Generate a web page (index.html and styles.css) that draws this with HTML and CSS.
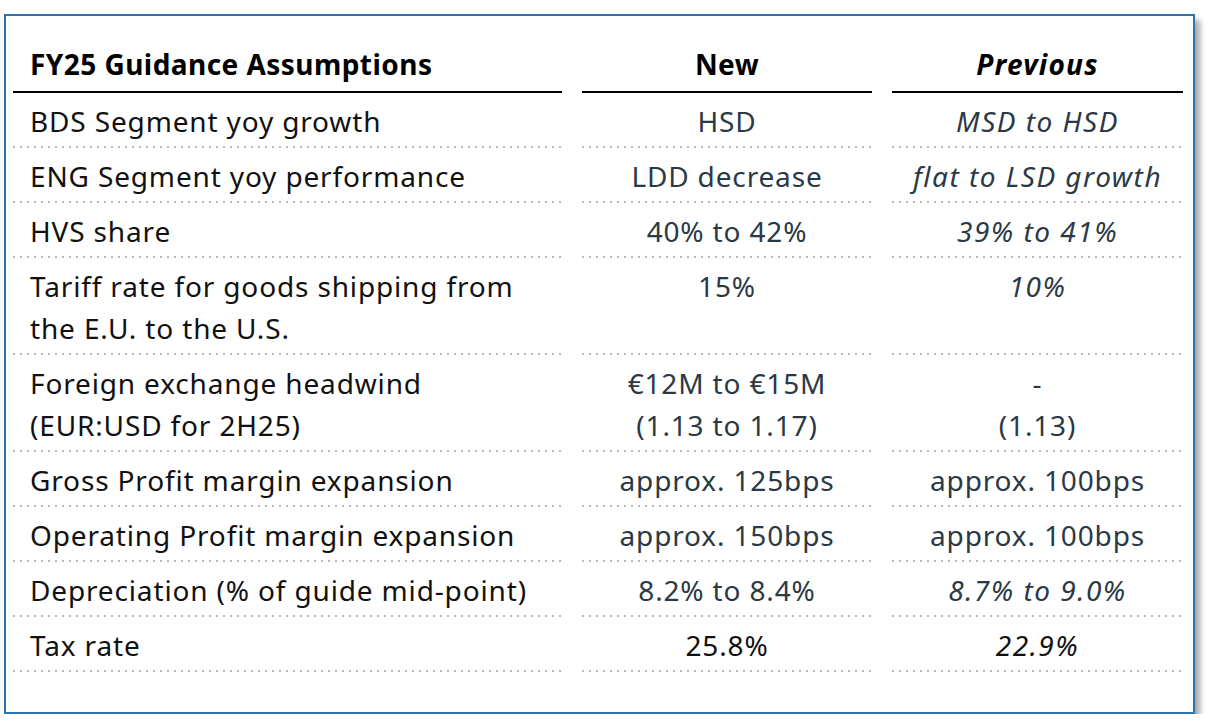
FILE: index.html
```html
<!DOCTYPE html>
<html>
<head>
<meta charset="utf-8">
<link rel="stylesheet" href="styles.css">
</head>
<body>
<div class="frame">
  <div class="table">
    <div class="cell head label">FY25 Guidance Assumptions</div>
    <div class="cell head val">New</div>
    <div class="cell head val prev">Previous</div>

    <div class="cell label">BDS Segment yoy growth</div>
    <div class="cell val">HSD</div>
    <div class="cell val prev">MSD to HSD</div>

    <div class="cell label">ENG Segment yoy performance</div>
    <div class="cell val">LDD decrease</div>
    <div class="cell val prev">flat to LSD growth</div>

    <div class="cell label">HVS share</div>
    <div class="cell val">40% to 42%</div>
    <div class="cell val prev">39% to 41%</div>

    <div class="cell label">Tariff rate for goods shipping from<br>the E.U. to the U.S.</div>
    <div class="cell val">15%</div>
    <div class="cell val prev">10%</div>

    <div class="cell label">Foreign exchange headwind<br>(EUR:USD for 2H25)</div>
    <div class="cell val">€12M to €15M<br>(1.13 to 1.17)</div>
    <div class="cell val">-<br>(1.13)</div>

    <div class="cell label">Gross Profit margin expansion</div>
    <div class="cell val">approx. 125bps</div>
    <div class="cell val">approx. 100bps</div>

    <div class="cell label">Operating Profit margin expansion</div>
    <div class="cell val">approx. 150bps</div>
    <div class="cell val">approx. 100bps</div>

    <div class="cell label">Depreciation (% of guide mid-point)</div>
    <div class="cell val">8.2% to 8.4%</div>
    <div class="cell val prev">8.7% to 9.0%</div>

    <div class="cell label">Tax rate</div>
    <div class="cell val dark">25.8%</div>
    <div class="cell val prev dark">22.9%</div>
  </div>
</div>
</body>
</html>
```

FILE: styles.css
```css
html, body {
  margin: 0;
  padding: 0;
  background: #ffffff;
}

body {
  font-family: "Noto Sans", "Open Sans", "Liberation Sans", sans-serif;
  font-size: 28px;
  letter-spacing: 0.85px;
  color: #111111;
}

.frame {
  box-sizing: border-box;
  margin: 14px 0 0 4px;
  width: 1191px;
  height: 700px;
  border: 2px solid #2f72ad;
  box-shadow: 5px 6px 6px rgba(0, 0, 0, 0.35);
  background: #ffffff;
  padding: 0 0 0 7px;
}

.table {
  display: grid;
  grid-template-columns: 549px 290px 291px;
  column-gap: 20px;
}

.cell {
  line-height: 42px;
  padding-top: 7px;
  padding-bottom: 6px;
  white-space: nowrap;
  background-image: linear-gradient(to right, #b9b9b9 2px, transparent 2px);
  background-size: 7px 2px;
  background-repeat: repeat-x;
  background-position: 7px bottom;
}

.cell.head {
  font-weight: 700;
  color: #000000;
  letter-spacing: 0.45px;
  padding-top: 27px;
  padding-bottom: 6px;
  background: none;
  border-bottom: 2.5px solid #000000;
}

.label {
  padding-left: 17px;
}

.val {
  text-align: center;
  color: #2b3945;
}

.prev {
  font-style: italic;
  letter-spacing: 1.5px;
}

.head.val {
  color: #000000;
}

.head.prev {
  letter-spacing: 1.25px;
}

.val.dark {
  color: #111111;
}
```
